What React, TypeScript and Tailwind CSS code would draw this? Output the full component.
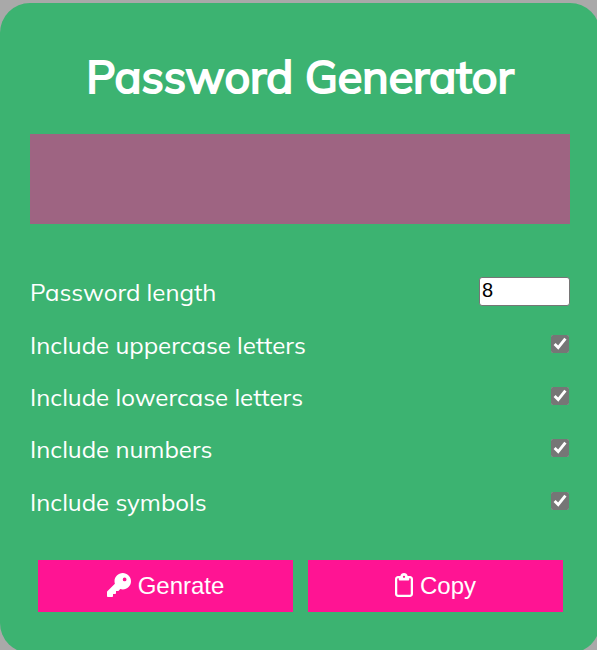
import { useState } from "react";
import { FaKey, FaRegClipboard } from "react-icons/fa6";

const options = [
  { id: "uppercase", label: "Include uppercase letters", chars: "ABCDEFGHIJKLMNOPQRSTUVWXYZ" },
  { id: "lowercase", label: "Include lowercase letters", chars: "abcdefghijklmnopqrstuvwxyz" },
  { id: "numbers", label: "Include numbers", chars: "0123456789" },
  { id: "symbols", label: "Include symbols", chars: "!@#$%^&*()-_=+" },
];

const buttonClass =
  "flex h-[52px] items-center justify-center gap-[7px] bg-[#ff1493] font-['Liberation_Sans',Arial,sans-serif] text-2xl text-white";

export default function App() {
  const [password, setPassword] = useState("");
  const [length, setLength] = useState(8);
  const [enabled, setEnabled] = useState(options.map(() => true));

  const generate = () => {
    const pool = options.filter((_, i) => enabled[i]).map((o) => o.chars).join("");
    setPassword(Array.from({ length }, () => pool.charAt(Math.floor(Math.random() * pool.length))).join(""));
  };

  return (
    <div className="h-screen overflow-hidden bg-[#a9a9a9] pt-[3px] font-[Muli,Mulish,Lato,sans-serif] text-white">
      <main className="-mr-[3px] rounded-[30px] bg-[#3cb371] px-[30px] pt-[44px] pb-[41px]">
        <h1 className="text-center text-[45px] leading-[58px] font-normal [-webkit-text-stroke:2px_white]">
          Password Generator
        </h1>
        <output className="mt-[29px] flex h-[90px] items-center justify-center bg-[#9e6482] text-2xl">
          {password}
        </output>
        <div className="mt-[42px] grid h-[262px] grid-rows-5 text-2xl">
          <div className="flex items-center justify-between">
            <label htmlFor="length">Password length</label>
            <input
              id="length"
              type="number"
              min={4}
              max={20}
              value={length}
              onChange={(e) => setLength(Number(e.target.value))}
              className="mb-[2px] h-[29px] w-[91px] rounded-[3px] border border-[#767676] bg-white px-[2px] pb-px font-['Liberation_Sans',Arial,sans-serif] text-xl text-black"
            />
          </div>
          {options.map((option, i) => (
            <div key={option.id} className="flex items-center justify-between">
              <label htmlFor={option.id}>{option.label}</label>
              <input
                id={option.id}
                type="checkbox"
                checked={enabled[i]}
                onChange={(e) => setEnabled(enabled.map((v, j) => (j === i ? e.target.checked : v)))}
                className="mr-px mb-[2px] size-[18px] accent-[#767676]"
              />
            </div>
          ))}
        </div>
        <div className="mt-[32px] grid grid-cols-2 gap-[15px] pr-[7px] pl-2">
          <button type="button" onClick={generate} className={buttonClass}>
            <FaKey className="mb-[2px]" />
            Genrate
          </button>
          <button
            type="button"
            onClick={() => navigator.clipboard?.writeText(password)}
            className={buttonClass}
          >
            <FaRegClipboard className="mb-[2px] w-[18px]" />
            Copy
          </button>
        </div>
      </main>
    </div>
  );
}
